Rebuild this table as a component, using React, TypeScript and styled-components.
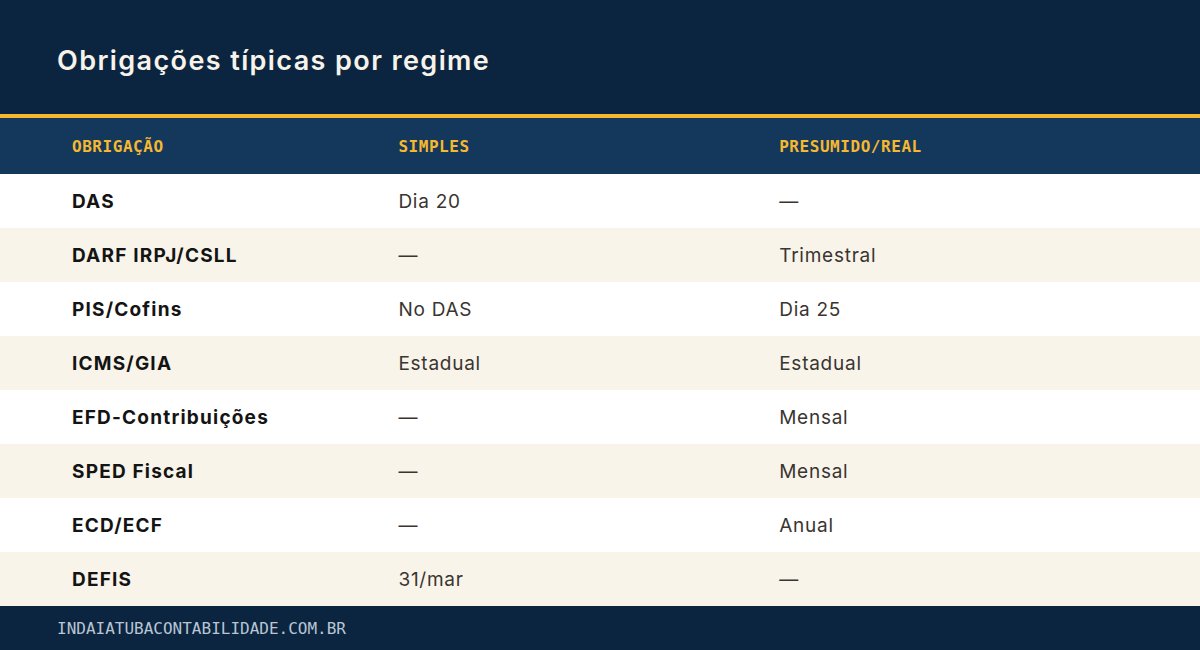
import React from "react";
import styled, { createGlobalStyle } from "styled-components";

const Global = createGlobalStyle`
  html, body { margin: 0; padding: 0; }
  body { width: 1200px; height: 650px; overflow: hidden; background: #0b2540; }
`;

const Page = styled.div`
  width: 1200px;
  height: 650px;
  display: flex;
  flex-direction: column;
  background: #0b2540;
`;

const TitleBar = styled.header`
  height: 118px;
  box-sizing: border-box;
  display: flex;
  align-items: center;
  padding: 0 57px;
  border-bottom: 4px solid #f6b82f;
`;

const Title = styled.h1`
  margin: 6px 0 0;
  font-family: Inter, "Noto Sans", sans-serif;
  font-weight: 600;
  font-size: 27px;
  letter-spacing: 1.4px;
  color: #f7f3ea;
`;

const Row = styled.div<{ $bg: string; $h: number }>`
  display: grid;
  grid-template-columns: 30% 35% 35%;
  padding: 0 56px;
  height: ${(p) => p.$h}px;
  align-items: center;
  background: ${(p) => p.$bg};
`;

const HeadCell = styled.div`
  padding: 0 16px;
  font-family: "DejaVu Sans Mono", monospace;
  font-weight: bold;
  font-size: 16px;
  letter-spacing: 0.55px;
  color: #f6b82f;
`;

const Cell = styled.div<{ $strong?: boolean }>`
  padding: 1px 16px 0;
  font-family: Inter, "Noto Sans", sans-serif;
  font-size: 19px;
  font-weight: ${(p) => (p.$strong ? 700 : 400)};
  letter-spacing: ${(p) => (p.$strong ? "1.2px" : "0.75px")};
  color: ${(p) => (p.$strong ? "#141414" : "#3a3531")};
`;

const Footer = styled.footer`
  flex: 1;
  display: flex;
  align-items: center;
  padding: 0 57px;
  font-family: "DejaVu Sans Mono", monospace;
  font-size: 16px;
  color: #b9c5d4;
`;

const rows: [string, string, string][] = [
  ["DAS", "Dia 20", "—"],
  ["DARF IRPJ/CSLL", "—", "Trimestral"],
  ["PIS/Cofins", "No DAS", "Dia 25"],
  ["ICMS/GIA", "Estadual", "Estadual"],
  ["EFD-Contribuições", "—", "Mensal"],
  ["SPED Fiscal", "—", "Mensal"],
  ["ECD/ECF", "—", "Anual"],
  ["DEFIS", "31/mar", "—"],
];

export default function App() {
  return (
    <Page>
      <Global />
      <TitleBar>
        <Title>Obrigações típicas por regime</Title>
      </TitleBar>
      <Row $bg="#14385c" $h={56}>
        <HeadCell>OBRIGAÇÃO</HeadCell>
        <HeadCell>SIMPLES</HeadCell>
        <HeadCell>PRESUMIDO/REAL</HeadCell>
      </Row>
      {rows.map((r, i) => (
        <Row key={r[0]} $bg={i % 2 === 0 ? "#ffffff" : "#f8f4ea"} $h={54}>
          <Cell $strong>{r[0]}</Cell>
          <Cell>{r[1]}</Cell>
          <Cell>{r[2]}</Cell>
        </Row>
      ))}
      <Footer>INDAIATUBACONTABILIDADE.COM.BR</Footer>
    </Page>
  );
}
